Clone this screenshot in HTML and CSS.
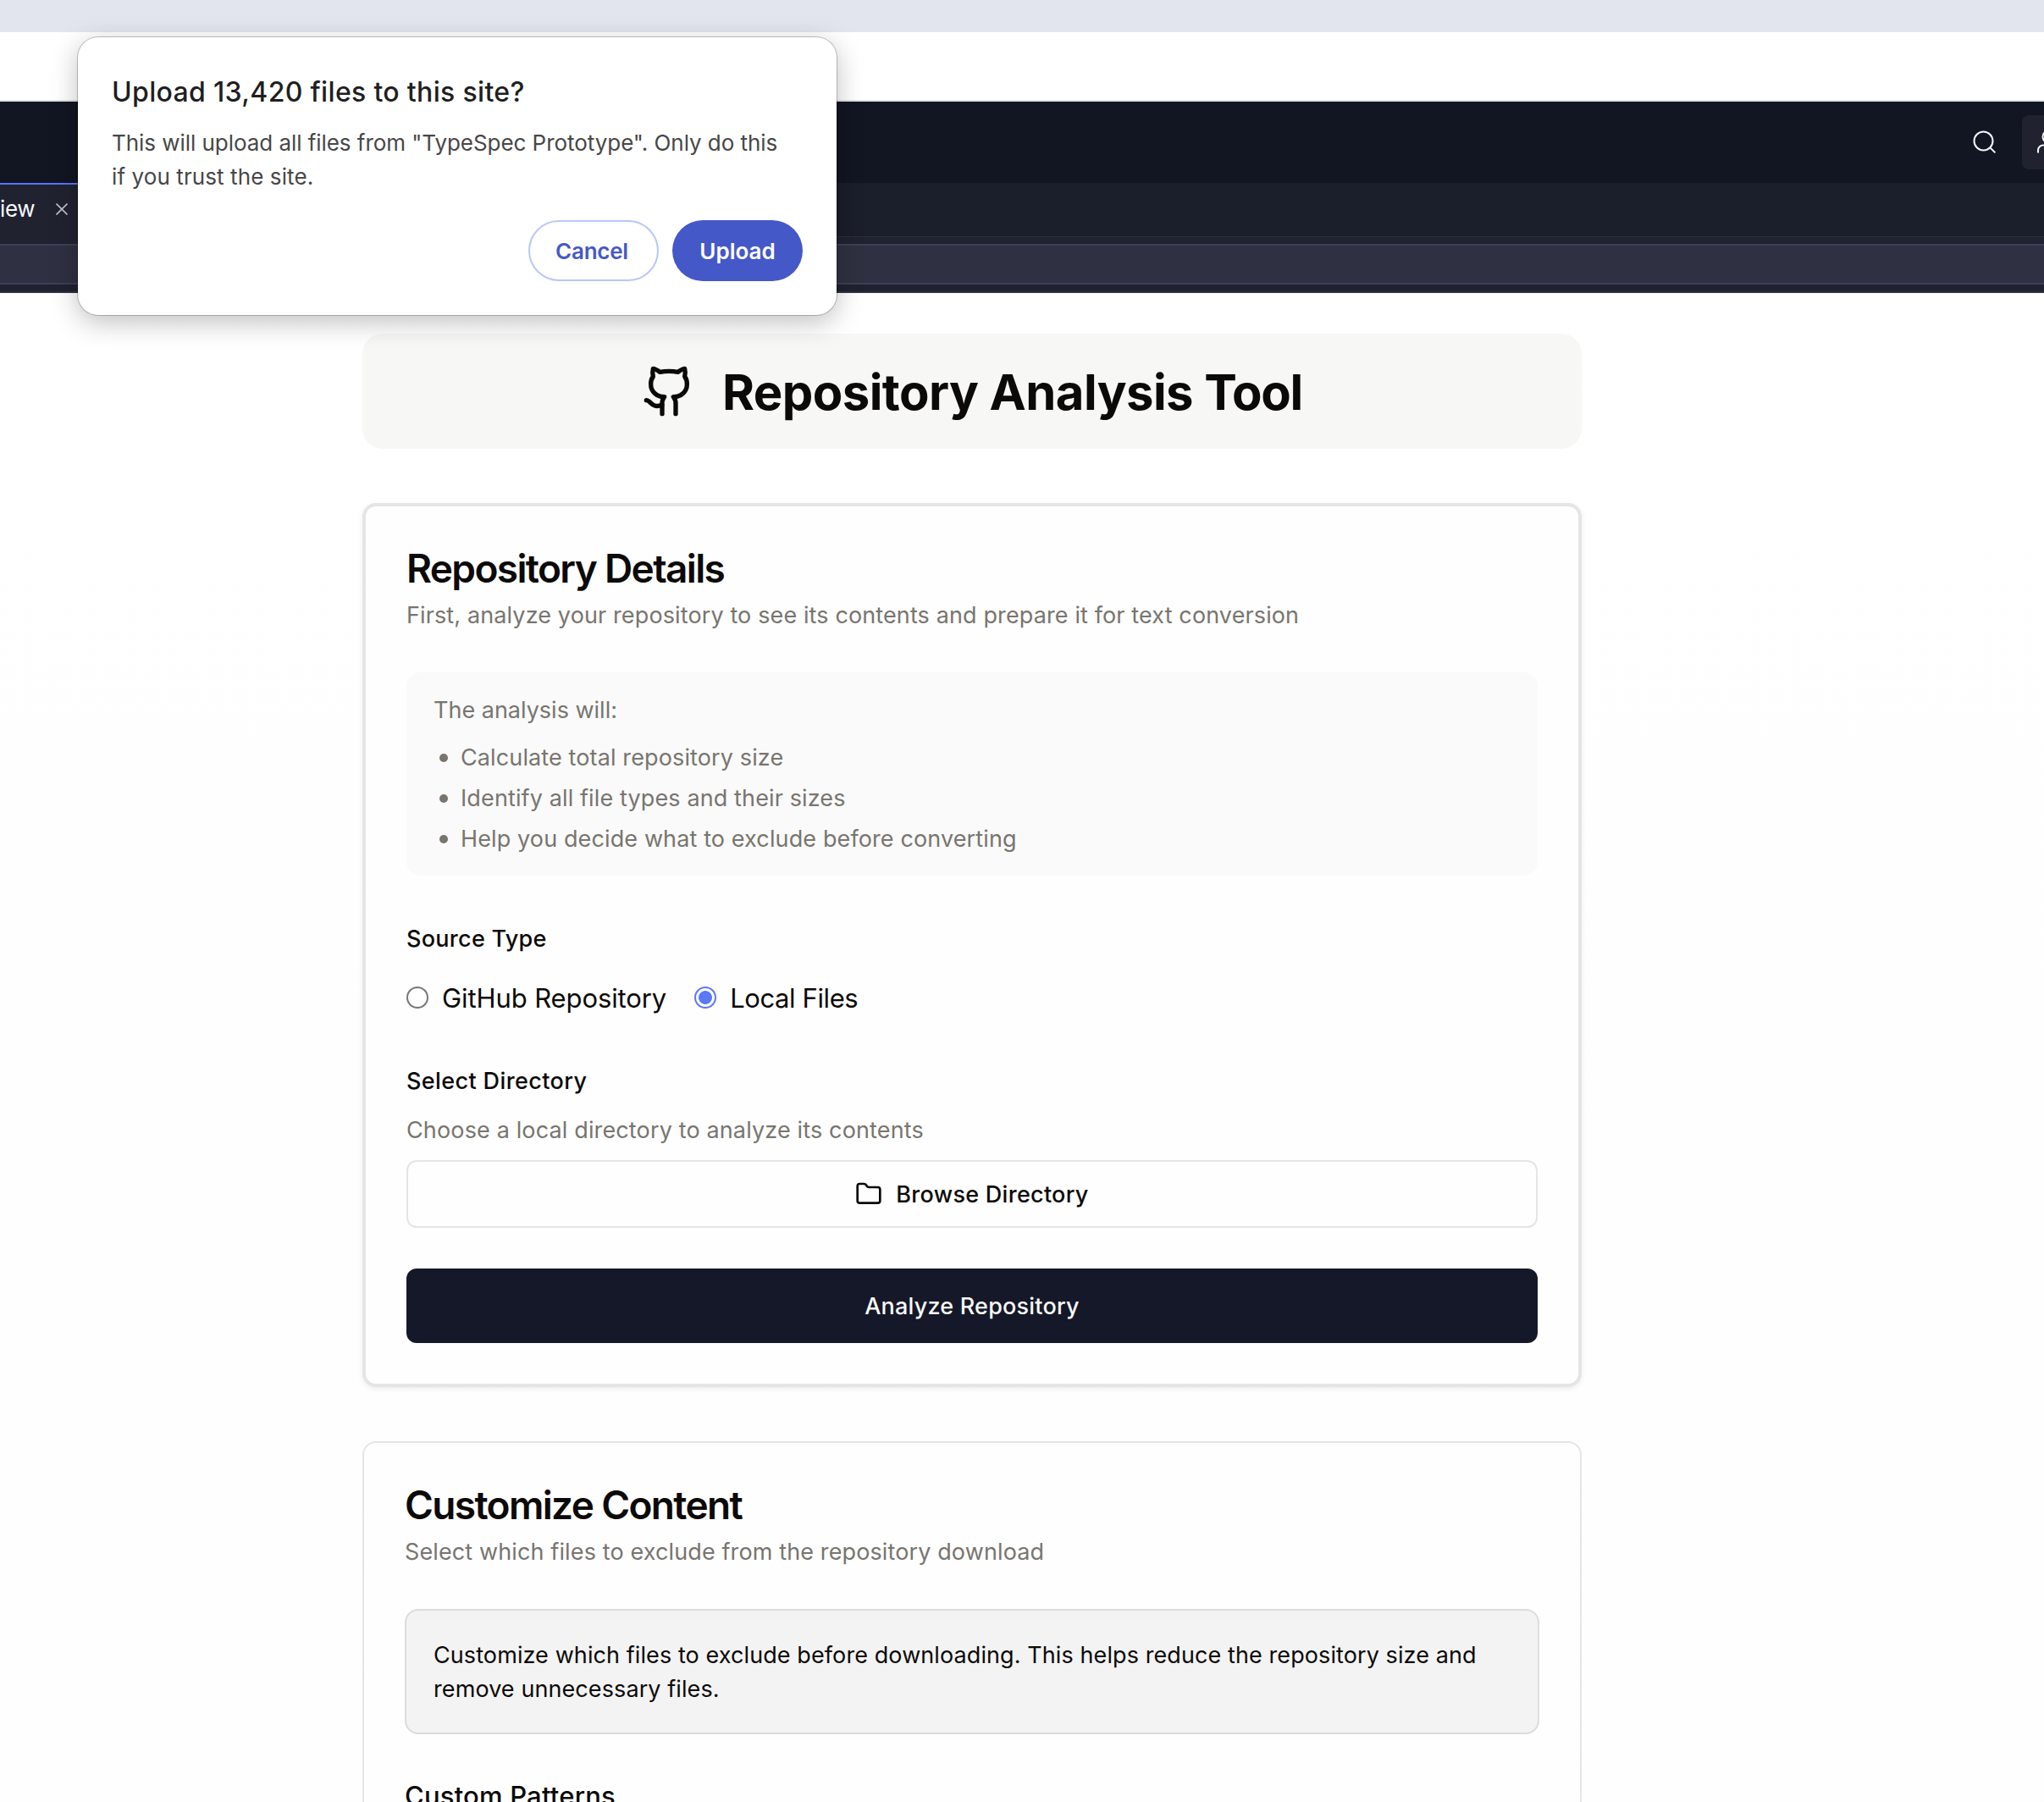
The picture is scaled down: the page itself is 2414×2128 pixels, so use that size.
FILE: index.html
```html
<!DOCTYPE html>
<html lang="en">
<head>
<meta charset="utf-8">
<title>Repository Analysis Tool</title>
<link rel="stylesheet" href="styles.css">
</head>
<body>
<div class="window">
  <div class="tabstrip"></div>
  <div class="toolbar"></div>

  <header class="app-header">
    <svg class="search-icon" viewBox="0 0 32 32"><circle cx="14.5" cy="14.5" r="11"/><path d="M22.4 22.4l6 6"/></svg>
    <div class="invite">
      <svg class="user-icon" viewBox="0 0 32 32"><circle cx="15.5" cy="9.5" r="7"/><path d="M3 28.500v-3a6 6 0 0 1 6-6h13a6 6 0 0 1 6 6v3"/></svg>
    </div>
  </header>

  <div class="tabs">
    <div class="tab">
      <span class="tab-label">iew</span>
      <svg class="tab-close" viewBox="0 0 14 14"><path d="M.5.5l13 13M13.500.5l-13 13"/></svg>
    </div>
  </div>
  <div class="address-row"><div class="address"></div></div>

  <main class="page">
    <div class="content">
      <div class="hero">
        <svg class="hero-icon" viewBox="0 0 24 24"><path d="M15 22v-4a4.800 4.800 0 0 0-1-3.500c3 0 6-2 6-5.500.080-1.250-.270-2.480-1-3.500.280-1.150.280-2.350 0-3.500 0 0-1 0-3 1.500-2.640-.5-5.360-.5-8 0C6 2 5 2 5 2c-.3 1.150-.3 2.350 0 3.500A5.403 5.403 0 0 0 4 9c0 3.500 3 5.500 6 5.500-.390.490-.680 1.050-.850 1.650-.170.6-.220 1.230-.150 1.850v4"/><path d="M9 18c-4.510 2-5-2-7-2"/></svg>
        <h1 class="hero-title">Repository Analysis <span class="hero-tool">Tool</span></h1>
      </div>

      <section class="card card-active">
        <h2 class="card-title">Repository Details</h2>
        <p class="card-sub">First, analyze your repository to see its contents and prepare it for text conversion</p>

        <div class="info">
          <p class="info-lead">The analysis will:</p>
          <ul class="info-list">
            <li>Calculate total repository size</li>
            <li>Identify all file types and their sizes</li>
            <li>Help you decide what to exclude before converting</li>
          </ul>
        </div>

        <h3 class="label source-label">Source Type</h3>
        <div class="radios">
          <label class="radio"><span class="dot"></span><span class="radio-text">GitHub Repository</span></label>
          <label class="radio"><span class="dot dot-on"></span><span class="radio-text local">Local Files</span></label>
        </div>

        <h3 class="label">Select Directory</h3>
        <p class="hint">Choose a local directory to analyze its contents</p>
        <button class="browse">
          <svg class="folder" viewBox="0 0 24 24"><path d="M20 20a2 2 0 0 0 2-2V8a2 2 0 0 0-2-2h-7.900a2 2 0 0 1-1.690-.9L9.600 3.900A2 2 0 0 0 7.930 3H4a2 2 0 0 0-2 2v13a2 2 0 0 0 2 2Z"/></svg>
          Browse Directory
        </button>
        <button class="analyze">Analyze Repository</button>
      </section>

      <section class="card">
        <h2 class="card-title">Customize Content</h2>
        <p class="card-sub">Select which files to exclude from the repository download</p>
        <div class="alert">Customize which files to exclude before downloading. This helps reduce the repository size and remove unnecessary files.</div>
        <h3 class="subhead">Custom Patterns</h3>
      </section>
    </div>
  </main>

  <div class="dialog">
    <h2 class="dialog-title">Upload 13,420 files to this site?</h2>
    <p class="dialog-text">This will upload all files from "TypeSpec Prototype". Only do this<br><span class="dialog-tail">if you trust the site.</span></p>
    <div class="dialog-actions">
      <button class="btn btn-outline">Cancel</button>
      <button class="btn btn-primary">Upload</button>
    </div>
  </div>
</div>
</body>
</html>
```
FILE: styles.css
```css
* { box-sizing: border-box; margin: 0; padding: 0; }
body {
  width: 2414px;
  height: 2128px;
  overflow: hidden;
  font-family: Inter, "Liberation Sans", sans-serif;
  color: #0c0a09;
  background: #fff;
}
button { font: inherit; color: inherit; border: 0; }
svg { fill: none; stroke: currentColor; flex: none; display: block; }

.window { position: relative; height: 2128px; display: flex; flex-direction: column; overflow: hidden; }

/* Browser chrome */
.tabstrip { height: 38px; background: #e2e5ee; flex: none; }
.toolbar { height: 82px; background: #fff; border-bottom: 2px solid #e1e4e1; flex: none; }

/* Workspace header */
.app-header {
  height: 96px;
  flex: none;
  display: flex;
  justify-content: flex-end;
  align-items: center;
  gap: 28px;
  background: #121522;
  color: #f5f7fa;
}
.search-icon { width: 32px; height: 32px; stroke-width: 2; }
.invite {
  width: 26px;
  height: 64px;
  padding: 16px 0 0 16px;
  overflow: hidden;
  background: #202230;
  border-radius: 8px 0 0 8px;
}
.user-icon { width: 32px; height: 32px; stroke-width: 2; }

.tabs {
  height: 64px;
  flex: none;
  background: #1b1e2b;
  border-bottom: 1px solid #2b2d3b;
}
.tab {
  width: 200px;
  height: 64px;
  display: flex;
  align-items: center;
  gap: 24px;
  background: #202230;
  border-top: 2px solid #5b74f5;
  padding-bottom: 4px;
  color: #f8f9fc;
}
.tab-label { width: 42px; font-size: 26px; line-height: 40px; letter-spacing: -0.4px; }
.tab-close { width: 14px; height: 14px; stroke: #bfc2cc; stroke-width: 1.600; }
.address-row {
  height: 66px;
  flex: none;
  padding: 8px 0;
  background: #202230;
  border-bottom: 2px solid #2f3142;
}
.address { height: 48px; background: #2f3142; border: solid #3e4056; border-width: 2px 0; }

/* Page */
.page { flex: 1; padding: 48px 0 0 428px; background: linear-gradient(#fff, #fdfdfd); }
.content { width: 1440px; }

.hero {
  height: 136px;
  display: flex;
  align-items: center;
  justify-content: center;
  gap: 31px;
  background: #f7f7f5;
  border-radius: 24px;
}
.hero-icon { width: 64px; height: 64px; stroke-width: 2; stroke-linecap: round; stroke-linejoin: round; }
.hero-title { font-size: 58px; line-height: 80px; font-weight: 700; letter-spacing: -.560px; padding-top: 2px; }
.hero-tool { letter-spacing: -1.300px; }

.card {
  height: 900px;
  margin-top: 64px;
  padding: 48px;
  background: #fefefe;
  border: 2px solid #e5e5e5;
  border-radius: 16px;
}
.card-active { height: 1044px; border: 4px solid #e6e5e4; box-shadow: 0 2px 6px rgba(0, 0, 0, .07); }
.card-title { font-size: 46px; line-height: 50px; font-weight: 600; letter-spacing: -1.640px; }
.card-sub { margin-top: 11px; font-size: 27px; line-height: 40px; letter-spacing: .120px; color: #78756f; }

.info {
  margin-top: 47px;
  padding: 25px 32px 23px;
  background: #fafafa;
  border-radius: 16px;
  color: #78756f;
  font-size: 27px;
  line-height: 40px;
  letter-spacing: .120px;
}
.info-lead { letter-spacing: 0; }
.info-list { margin-top: 16px; list-style: none; display: grid; gap: 8px; }
.info-list li { display: flex; align-items: center; gap: 15px; padding-left: 7px; }
.info-list li::before { content: ""; width: 10px; height: 10px; border-radius: 50%; background: #78756f; }

.label { font-size: 27px; line-height: 40px; font-weight: 500; letter-spacing: .380px; }
.source-label { margin-top: 55px; letter-spacing: .280px; }
.radios { display: flex; gap: 33px; margin: 25px 0 55px; }
.radio { display: flex; align-items: center; gap: 16px; font-size: 31px; line-height: 48px; letter-spacing: -.1px; }
.radio-text { padding-top: 1px; line-height: 47px; }
.local { letter-spacing: -.400px; }
.dot { width: 26px; height: 26px; flex: none; border: 2px solid #767676; border-radius: 50%; background: #fff; }
.dot-on { border-color: #5b78f6; background: radial-gradient(circle, #5b78f6 7.500px, #fff 8.300px); }
.hint { margin-top: 18px; font-size: 27px; line-height: 40px; letter-spacing: .140px; color: #78756f; }
.browse {
  width: 100%;
  height: 80px;
  margin-top: 15px;
  display: flex;
  align-items: center;
  justify-content: center;
  gap: 16px;
  background: #fefefe;
  border: 2px solid #e5e5e5;
  border-radius: 12px;
  font-size: 27px;
  font-weight: 500;
  letter-spacing: .280px;
}
.folder { width: 32px; height: 32px; stroke-width: 2; stroke-linecap: round; stroke-linejoin: round; }
.analyze {
  display: block;
  width: 100%;
  height: 88px;
  margin-top: 48px;
  background: #151828;
  border-radius: 12px;
  color: #f8f8f6;
  font-size: 27px;
  font-weight: 500;
  letter-spacing: .210px;
}

.alert {
  height: 148px;
  margin-top: 47px;
  padding: 33px 32px 31px;
  background: #f3f3f3;
  border: 2px solid #dcdcdc;
  border-radius: 16px;
  font-size: 27px;
  line-height: 40px;
  letter-spacing: .090px;
}
.subhead { margin-top: 49px; font-size: 31px; line-height: 48px; font-weight: 500; letter-spacing: .190px; }

/* Upload prompt */
.dialog {
  position: absolute;
  left: 92px;
  top: 44px;
  width: 896px;
  height: 328px;
  padding: 41px 40px 40px;
  background: #fff;
  border-radius: 24px;
  box-shadow: 0 0 0 1px rgba(0, 0, 0, .22), 0 8px 32px rgba(0, 0, 0, .26);
}
.dialog-title { font-size: 32px; line-height: 48px; font-weight: 500; letter-spacing: .330px; color: #1f1f1f; }
.dialog-text { margin-top: 16px; font-size: 26px; line-height: 40px; letter-spacing: -.050px; color: #474747; }
.dialog-tail { letter-spacing: .1px; }
.dialog-actions { display: flex; justify-content: flex-end; gap: 16px; margin-top: 31px; }
.btn { width: 154px; height: 72px; border-radius: 36px; font-size: 26px; font-weight: 600; }
.btn-outline { background: #fff; border: 2px solid #b9c7f7; color: #4558c7; letter-spacing: -.250px; padding-right: 4px; }
.btn-primary { background: #4558c7; color: #fff; letter-spacing: 0; }
```
